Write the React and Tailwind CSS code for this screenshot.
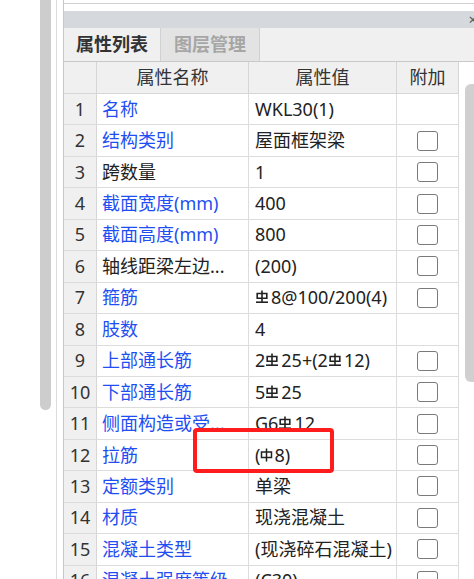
import React from 'react';

function Rebar3() {
  return (
    <svg width="14" height="14" viewBox="0 0 14 14" className="inline-block mr-[2px]" style={{ verticalAlign: 'baseline' }}>
      <g fill="none" stroke="#222" strokeWidth="1.6">
        <path d="M7 0.5V12.5" />
        <path d="M2.2 3.5H11.8V8.2H2.2Z" />
        <path d="M1 12.2H13" />
      </g>
    </svg>
  );
}

function Rebar1() {
  return (
    <svg width="13" height="14" viewBox="0 0 13 14" className="inline-block mr-[1px]" style={{ verticalAlign: 'baseline' }}>
      <g fill="none" stroke="#222" strokeWidth="1.5">
        <path d="M6.5 0.5V13.5" />
        <path d="M1.5 4H11.5V9.5H1.5Z" />
      </g>
    </svg>
  );
}

function Val({ text }) {
  const parts = [];
  let buf = '';
  let k = 0;
  for (const ch of text) {
    if (ch === '#' || ch === '$') {
      if (buf) parts.push(<span key={k++}>{buf}</span>);
      buf = '';
      parts.push(ch === '#' ? <Rebar3 key={k++} /> : <Rebar1 key={k++} />);
    } else {
      buf += ch;
    }
  }
  if (buf) parts.push(<span key={k++}>{buf}</span>);
  return <span className="whitespace-nowrap">{parts}</span>;
}

const rows = [
  { n: '名称', b: true, v: 'WKL30(1)', c: false },
  { n: '结构类别', b: true, v: '屋面框架梁', c: true },
  { n: '跨数量', b: false, v: '1', c: true },
  { n: '截面宽度(mm)', b: true, v: '400', c: true },
  { n: '截面高度(mm)', b: true, v: '800', c: true },
  { n: '轴线距梁左边...', b: false, v: '(200)', c: true },
  { n: '箍筋', b: true, v: '#8@100/200(4)', c: true },
  { n: '肢数', b: true, v: '4', c: false },
  { n: '上部通长筋', b: true, v: '2#25+(2#12)', c: true },
  { n: '下部通长筋', b: true, v: '5#25', c: true },
  { n: '侧面构造或受...', b: true, v: 'G6#12', c: true },
  { n: '拉筋', b: true, v: '($8)', c: true },
  { n: '定额类别', b: true, v: '单梁', c: true },
  { n: '材质', b: true, v: '现浇混凝土', c: true },
  { n: '混凝土类型', b: true, v: '(现浇碎石混凝土)', c: true },
  { n: '混凝土强度等级', b: true, v: '(C30)', c: true },
];

export default function App() {
  return (
    <div className="relative w-[474px] h-[579px] overflow-hidden bg-white flex font-['Noto_Sans','Noto_Sans_CJK_SC',sans-serif] text-[18px] text-[#222]">
      <div className="w-[40px] shrink-0" />
      <div className="w-[11px] shrink-0">
        <div className="h-[410px] bg-[#cdcdcd] rounded-b-[6px]" />
      </div>
      <div className="w-[5px] shrink-0" />
      <div className="w-[1px] shrink-0 bg-[#dcdcdc]" />
      <div className="w-[6px] shrink-0" />
      <div className="flex-1 min-w-0 flex flex-col border-l border-[#c6c6c6]">
        <div className="h-[4px] shrink-0 border-b border-[#d0d0d0]" />
        <div className="h-[7px] shrink-0" />
        <div className="h-[17px] shrink-0 bg-[#d5d8dd] flex items-center justify-end">
          <span className="text-[15px] leading-none text-[#555] mr-[-3px]">×</span>
        </div>
        <div className="h-[34px] shrink-0 bg-[#f0f0f0] border-b border-[#c9c9c9] flex">
          <div className="w-[97px] flex items-center justify-center border-r border-[#d0d0d0] font-bold text-[#333]">
            属性列表
          </div>
          <div className="w-[99px] flex items-center justify-center bg-[#e3e3e3] border-r border-[#d0d0d0] font-bold text-[#a6a6a6]">
            图层管理
          </div>
        </div>
        <div className="flex flex-1 min-h-0">
          <div className="w-[395px] shrink-0 flex flex-col">
            <div className="h-[32px] shrink-0 flex bg-[#f0f0f0] border-b border-[#d6d6d6] text-[#333]">
              <div className="w-[33px] border-r border-[#d6d6d6]" />
              <div className="w-[152px] border-r border-[#d6d6d6] flex items-center justify-center">属性名称</div>
              <div className="w-[148px] border-r border-[#d6d6d6] flex items-center justify-center">属性值</div>
              <div className="w-[62px] border-r border-[#d6d6d6] flex items-center justify-center">附加</div>
            </div>
            {rows.map((r, i) => (
              <div key={i} className="h-[31.45px] shrink-0 flex border-b border-[#dcdcdc]">
                <div className="w-[33px] shrink-0 bg-[#f0f0f0] border-r border-[#d6d6d6] flex items-center justify-center text-[#333]">
                  {i + 1}
                </div>
                <div className={`w-[152px] shrink-0 border-r border-[#dcdcdc] flex items-center pl-[5px] whitespace-nowrap overflow-hidden ${r.b ? 'text-[#1f4ff2]' : 'text-[#222]'}`}>
                  {r.n}
                </div>
                <div className="w-[148px] shrink-0 border-r border-[#dcdcdc] flex items-center pl-[6px] overflow-hidden">
                  <Val text={r.v} />
                </div>
                <div className="w-[62px] shrink-0 border-r border-[#dcdcdc] flex items-center justify-center">
                  {r.c && <div className="w-[21px] h-[20px] border border-[#7a7a7a] rounded-[3px] bg-white" />}
                </div>
              </div>
            ))}
          </div>
          <div className="flex-1 pl-[6px] pt-[22px]">
            <div className="w-[14px] h-[298px] bg-[#d0d0d0] rounded-[6px]" />
          </div>
        </div>
      </div>
      <div className="absolute left-[193px] top-[428px] w-[141px] h-[45px] border-4 border-[#ff1c1c] rounded-[4px]" />
    </div>
  );
}
